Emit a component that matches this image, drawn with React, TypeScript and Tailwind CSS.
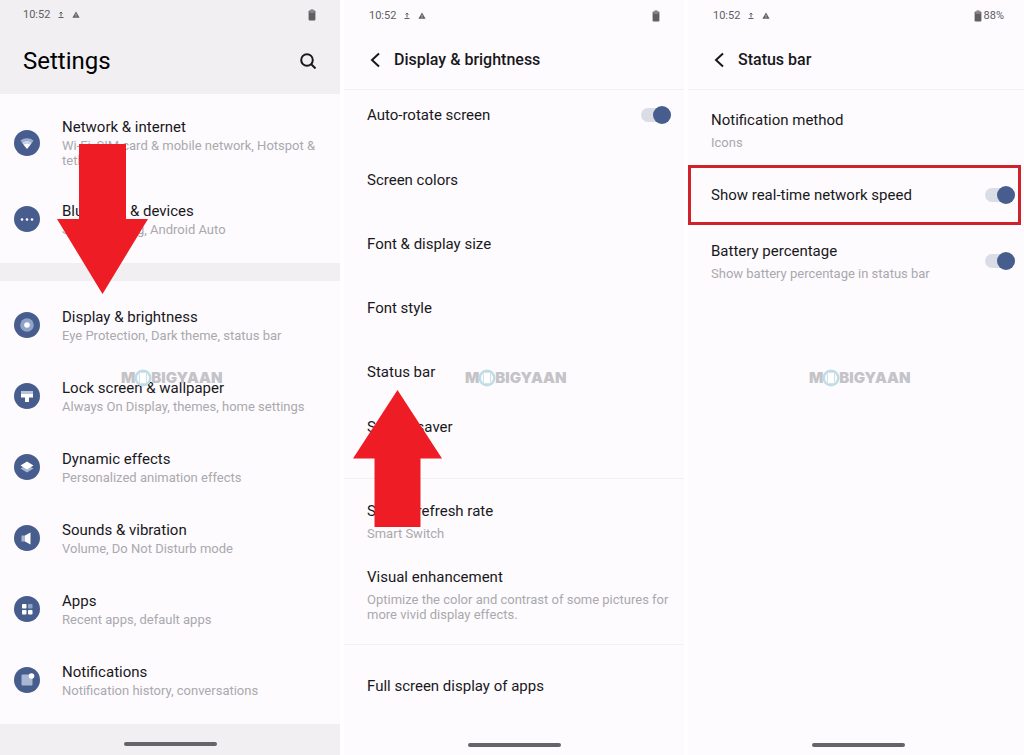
import { useState } from "react";
import type { ReactNode } from "react";

type SettingItem = {
  title: string;
  sub: string;
  icon: ReactNode;
};

const connectivity: SettingItem[] = [
  {
    title: "Network & internet",
    sub: "Wi-Fi, SIM card & mobile network, Hotspot & tethering",
    icon: (
      <>
        <path d="M6.5 10.5a11 11 0 0 1 13 0L18 12.8a8 8 0 0 0-10 0z" fill="#9fb0d2" />
        <path d="M8 12.8a8 8 0 0 1 10 0l-1.5 2a5.500 5.500 0 0 0-7 0z" fill="#ccd5e8" />
        <path d="M9.500 14.800a5.500 5.500 0 0 1 7 0L13 19z" fill="#fff" />
      </>
    ),
  },
  {
    title: "Bluetooth & devices",
    sub: "Screencasting, Android Auto",
    icon: (
      <g fill="#fff">
        <circle cx="8" cy="13.500" r="1.300" />
        <circle cx="13" cy="13.500" r="1.300" />
        <circle cx="18" cy="13.500" r="1.300" />
      </g>
    ),
  },
];

const general: SettingItem[] = [
  {
    title: "Display & brightness",
    sub: "Eye Protection, Dark theme, status bar",
    icon: (
      <>
        <circle cx="13" cy="13" r="6.800" fill="#91a3c8" />
        <circle cx="13" cy="13" r="2.800" fill="#fff" />
      </>
    ),
  },
  {
    title: "Lock screen & wallpaper",
    sub: "Always On Display, themes, home settings",
    icon: (
      <>
        <path d="M7 8h12v4H7z" fill="#b9c4dc" />
        <path d="M7 11h12v3.500h-4V19h-4v-4.500H7z" fill="#fff" />
      </>
    ),
  },
  {
    title: "Dynamic effects",
    sub: "Personalized animation effects",
    icon: (
      <>
        <path d="M6.500 14.500 13 11l6.500 3.500L13 18.500z" fill="#a9b7d5" />
        <path d="M6.500 11.500 13 7.500l6.500 4L13 15.500z" fill="#fff" />
      </>
    ),
  },
  {
    title: "Sounds & vibration",
    sub: "Volume, Do Not Disturb mode",
    icon: (
      <>
        <path d="M7.500 10.500H11v6H7.500z" fill="#a9b7d5" />
        <path d="M11 10.500 16.500 7.500v12L11 16.500z" fill="#fff" />
      </>
    ),
  },
  {
    title: "Apps",
    sub: "Recent apps, default apps",
    icon: (
      <>
        <rect x="8" y="8" width="4.500" height="4.500" rx=".8" fill="#fff" />
        <rect x="14" y="8" width="4.500" height="4.500" rx=".8" fill="#91a3c8" />
        <rect x="8" y="14" width="4.500" height="4.500" rx=".8" fill="#fff" />
        <rect x="14" y="14" width="4.500" height="4.500" rx=".8" fill="#fff" />
      </>
    ),
  },
  {
    title: "Notifications",
    sub: "Notification history, conversations",
    icon: (
      <>
        <rect x="7.500" y="7.500" width="11" height="11" rx="1" fill="#a9b7d5" />
        <circle cx="17.500" cy="9" r="2.800" fill="#fff" />
      </>
    ),
  },
];

function StatusIcons({ percent }: { percent?: string }) {
  return (
    <div className="flex h-4 items-center text-[11px] text-[#5f5e62]">
      <span>10:52</span>
      <svg className="ml-[7px] size-2" viewBox="0 0 8 8" fill="none" stroke="currentColor">
        <path d="M4 5.500V1.500M2.500 2.500 4 1l1.500 1.500M1.500 6.500h5" />
      </svg>
      <svg className="ml-[7px] size-2" viewBox="0 0 8 8">
        <path d="M4 .5 7.600 6.800H.4z" fill="currentColor" />
        <path d="M4 2.800v2M4 5.300v.8" stroke="#eee" strokeWidth=".7" />
      </svg>
      <svg className="ml-auto h-3 w-2" viewBox="0 0 8 12" fill="currentColor">
        <path d="M2.500.5h3v1h-3z" />
        <rect x=".6" y="1.400" width="6.800" height="10" rx="1" />
        <path d="M1.500 2.500h5v1h-5z" fill="#a9a8ac" />
      </svg>
      {percent && <span className="ml-0.5">{percent}</span>}
    </div>
  );
}

function HomeBar() {
  return <div className="mx-auto h-1 w-[93px] rounded-full bg-[#656468]" />;
}

function Watermark() {
  return (
    <div className="pointer-events-none absolute top-[370px] left-[121px] flex h-4 items-center font-[Inter,sans-serif] text-[15px] font-black text-[#c4c3c8]">
      <span>M</span>
      <svg className="-mx-px size-[18px]" viewBox="0 0 18 18" fill="none">
        <circle cx="9" cy="9" r="7.300" stroke="#bfdde6" strokeWidth="2.400" />
        <rect x="5.500" y="3.500" width="7" height="11" rx="1" fill="#fff" stroke="#cfe4ea" />
      </svg>
      <span>BIGYAAN</span>
    </div>
  );
}

function Arrow({ className }: { className: string }) {
  return (
    <svg className={className} viewBox="0 0 91 150" preserveAspectRatio="none" aria-hidden="true">
      <path d="M22 0h47v75h22L45.500 150 0 75h22z" fill="#ee1c25" />
    </svg>
  );
}

function SettingRow({ item }: { item: SettingItem }) {
  return (
    <button className="flex min-h-[71px] w-full items-center gap-[22px] py-[13px] pr-6 pl-3.5 text-left">
      <svg className="size-[26px] shrink-0" viewBox="0 0 26 26">
        <circle cx="13" cy="13" r="13" fill="#465d8e" />
        {item.icon}
      </svg>
      <span className="block">
        <span className="block text-[15px] leading-[22px]">{item.title}</span>
        <span className="block pb-px text-[13px] leading-[15px] text-[#aaa9ad]">{item.sub}</span>
      </span>
    </button>
  );
}

function Header({ title, percent }: { title: string; percent?: string }) {
  return (
    <header className="h-[90px] border-b border-[#f2f0f4] pt-2 pl-[25px]">
      <div className={percent ? "pr-5" : "pr-6"}>
        <StatusIcons percent={percent} />
      </div>
      <div className="mt-6 flex h-6 items-center">
        <button aria-label="Back">
          <svg className="h-4 w-3" viewBox="0 0 12 16" fill="none" stroke="#19181b" strokeWidth="2">
            <path d="M10 1.500 3 8l7 6.500" />
          </svg>
        </button>
        <h2 className="ml-[13px] text-base font-medium">{title}</h2>
      </div>
    </header>
  );
}

function Text({ title, sub }: { title: string; sub?: string }) {
  return (
    <span className="block">
      <span className="block text-[15px] leading-[23px]">{title}</span>
      {sub && <span className="mt-[3px] block text-[13px] leading-[15px] text-[#aaa9ad]">{sub}</span>}
    </span>
  );
}

function ToggleRow({ title, sub, className }: { title: string; sub?: string; className: string }) {
  const [on, setOn] = useState(true);

  return (
    <label className={`flex items-center justify-between ${className}`}>
      <Text title={title} sub={sub} />
      <input
        type="checkbox"
        checked={on}
        onChange={() => setOn(!on)}
        className="relative h-3.5 w-[30px] shrink-0 appearance-none rounded-full bg-[#dadde6] after:absolute after:-top-0.5 after:left-0 after:size-[18px] after:rounded-full after:bg-[#9a9ca3] checked:after:left-3 checked:after:bg-[#465d8e]"
      />
    </label>
  );
}

export default function App() {
  return (
    <div className="grid min-h-screen grid-cols-[340fr_340fr_336fr] gap-1 bg-white font-[Roboto,sans-serif] text-[#19181b]">
      {/* Settings list */}
      <section className="relative flex flex-col bg-[#fdfbfe]">
        <header className="h-[94px] bg-[#f1eff2] pt-[7px] pr-6 pl-[23px]">
          <StatusIcons />
          <div className="mt-5 flex h-9 items-center justify-between">
            <h1 className="text-2xl text-black">Settings</h1>
            <button aria-label="Search">
              <svg className="size-4" viewBox="0 0 16 16" fill="none" stroke="#19181b" strokeWidth="2">
                <circle cx="7" cy="7" r="5.800" />
                <path d="m11 11 4.500 4.500" />
              </svg>
            </button>
          </div>
        </header>
        <div className="h-[169px] pt-[9px]">
          <div className="flex flex-col gap-px">
            {connectivity.map((item) => (
              <SettingRow key={item.title} item={item} />
            ))}
          </div>
        </div>
        <div className="h-[18px] bg-[#f1eff2]" />
        <div className="pt-2 pb-[9px]">
          {general.map((item) => (
            <SettingRow key={item.title} item={item} />
          ))}
        </div>
        <footer className="mt-auto h-[31px] bg-[#f1eff2] pt-[18px]">
          <HomeBar />
        </footer>
        <Watermark />
        <Arrow className="absolute top-36 left-[57px] h-[150px] w-[91px]" />
      </section>

      {/* Display & brightness */}
      <section className="relative flex flex-col bg-[#fdfbfe]">
        <Header title="Display & brightness" />
        <ToggleRow title="Auto-rotate screen" className="mb-2 h-[50px] pr-[13px] pl-[23px]" />
        {["Screen colors", "Font & display size", "Font style", "Status bar"].map((title) => (
          <button key={title} className="h-16 px-[23px] text-left">
            <Text title={title} />
          </button>
        ))}
        <button className="h-[46px] px-[23px] text-left">
          <Text title="Screen saver" />
        </button>
        <div className="mt-7 border-y border-[#f2f0f4] pt-[21px] pb-[22px]">
          <button className="block w-full px-[23px] text-left">
            <Text title="Screen refresh rate" sub="Smart Switch" />
          </button>
          <button className="mt-[25px] block w-full pr-3 pl-[23px] text-left">
            <Text
              title="Visual enhancement"
              sub="Optimize the color and contrast of some pictures for more vivid display effects."
            />
          </button>
        </div>
        <button className="h-[82px] px-[23px] text-left">
          <Text title="Full screen display of apps" />
        </button>
        <footer className="mt-auto pb-2">
          <HomeBar />
        </footer>
        <Watermark />
        <Arrow className="absolute top-[390px] left-[9px] h-[137px] w-[89px] rotate-180" />
      </section>

      {/* Status bar */}
      <section className="relative flex flex-col bg-[#fdfbfe]">
        <Header title="Status bar" percent="88%" />
        <button className="h-[75px] px-[23px] pt-1 text-left">
          <Text title="Notification method" sub="Icons" />
        </button>
        <ToggleRow
          title="Show real-time network speed"
          className="mr-[3px] h-[60px] border-[3px] border-[#cf222b] pr-[3px] pl-5"
        />
        <ToggleRow
          title="Battery percentage"
          sub="Show battery percentage in status bar"
          className="h-[71px] pr-[9px] pl-[23px]"
        />
        <footer className="mt-auto pb-2 pl-1">
          <HomeBar />
        </footer>
        <Watermark />
      </section>
    </div>
  );
}
